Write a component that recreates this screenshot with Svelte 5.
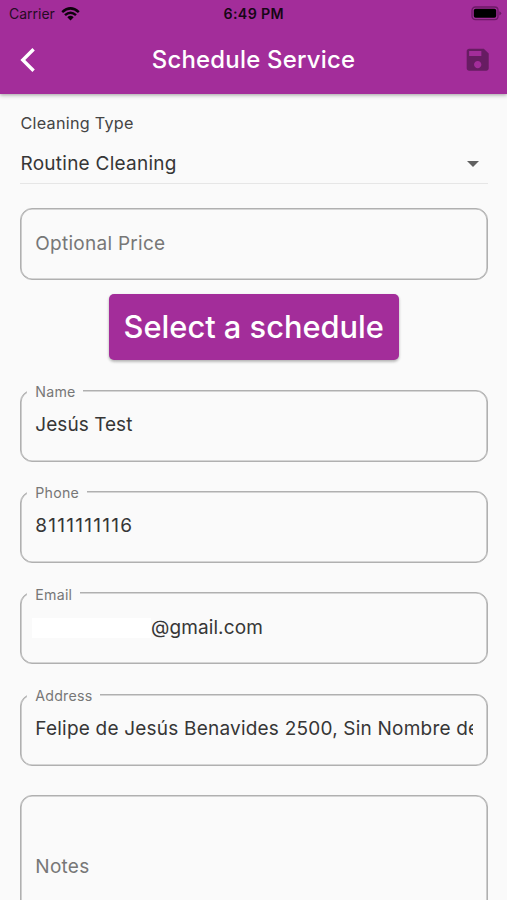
<script lang="ts">
  type Field = { id: string; label: string; value: string; spacing: number };

  let cleaningType = $state("Routine Cleaning");

  const fields: Field[] = [
    { id: "name", label: "Name", value: "Jesús Test", spacing: 0.05 },
    { id: "phone", label: "Phone", value: "8111111116", spacing: 1.25 },
    { id: "email", label: "Email", value: "@gmail.com", spacing: 0.1 },
    { id: "address", label: "Address", value: "Felipe de Jesús Benavides 2500, Sin Nombre de Colonia", spacing: 0.21 },
  ];
</script>

<div class="screen">
  <header>
    <div class="status">
      <div class="carrier">
        <span>Carrier</span>
        <svg width="19" height="14" viewBox="0 0 19 14">
          <path d="M1.2 5.2 Q9.5 -2.4 17.8 5.2" />
          <path d="M4 8.2 Q9.5 3.2 15 8.2" />
          <path class="dot" d="M6.3 10.2 Q9.5 7.4 12.7 10.2 L9.5 13.6 Z" />
        </svg>
      </div>
      <span class="time">6:49 PM</span>
      <svg class="battery" width="31" height="15" viewBox="0 0 31 15">
        <rect x="1" y="1" width="26" height="12.6" rx="3.4" class="case" />
        <rect x="2.8" y="2.8" width="22.4" height="9" rx="1.8" />
        <path d="M28.3 5.2 Q30.2 6 30.2 7.3 Q30.2 8.6 28.3 9.4 Z" class="cap" />
      </svg>
    </div>
    <div class="bar">
      <button class="icon" aria-label="Back">
        <svg width="20" height="28" viewBox="0 0 20 28">
          <path class="chevron" d="M16.6 3.2 L5.8 14 L16.6 24.8" />
        </svg>
      </button>
      <h1>Schedule Service</h1>
      <button class="icon" aria-label="Save">
        <svg width="29.4" height="29.4" viewBox="0 0 24 24">
          <path class="save" d="M17 3H5c-1.11 0-2 .9-2 2v14c0 1.1.89 2 2 2h14c1.1 0 2-.9 2-2V7l-4-4zm-5 16c-1.66 0-3-1.34-3-3s1.34-3 3-3 3 1.34 3 3-1.34 3-3 3zm3-10H5V5h10v4z" />
        </svg>
      </button>
    </div>
  </header>

  <main>
    <div class="caption">Cleaning Type</div>
    <div class="select">
      <span>{cleaningType}</span>
      <svg width="12" height="6" viewBox="0 0 12 6"><path d="M0 0h12L6 6z" /></svg>
    </div>

    <div class="field price"><span class="placeholder">Optional Price</span></div>

    <button class="schedule">Select a schedule</button>

    {#each fields as f (f.id)}
      <div class="field">
        <span class="label">{f.label}</span>
        {#if f.id === "email"}<span class="mask"></span>{/if}
        <span class="value" style="letter-spacing: {f.spacing}px">{f.value}</span>
      </div>
    {/each}

    <div class="field notes"><span class="placeholder">Notes</span></div>
  </main>
</div>

<style>
  :global(body) { background: #fafafa; overflow: hidden; }
  .screen {
    width: 507px; height: 900px; overflow: hidden;
    display: flex; flex-direction: column;
    background: #fafafa; color: #363636;
    font-family: Inter, Roboto, "Liberation Sans", sans-serif;
  }
  button { border: none; padding: 0; background: none; font: inherit; }

  header {
    height: 93.5px; flex: none; background: #a32d9a; z-index: 1;
    box-shadow: 0 2px 4px rgba(0, 0, 0, 0.2), 0 1px 2px rgba(0, 0, 0, 0.12);
  }
  .status {
    height: 27px; padding: 0 5px 0 9px; color: #260b24;
    display: grid; grid-template-columns: 1fr auto 1fr; align-items: center;
    font-size: 14px;
  }
  .carrier { display: flex; align-items: center; gap: 6px; }
  .carrier path { fill: none; stroke: #0d020c; stroke-width: 2.5; }
  .carrier .dot { fill: #0d020c; stroke: none; }
  .time { font-weight: 600; font-size: 14.2px; letter-spacing: 0.35px; margin-right: 3.5px; color: #160615; }
  .battery { justify-self: end; }
  .case { fill: none; stroke: #6c1a66; stroke-width: 1.3; }
  .cap { fill: #6c1a66; }
  .bar {
    height: 65px; padding: 0 15px 0 17px;
    display: flex; align-items: center; justify-content: space-between;
  }
  .icon { display: flex; width: 29.4px; }
  .chevron { fill: none; stroke: #fff; stroke-width: 3.4; }
  .save { fill: #671c62; }
  h1 { margin: 0 2px 0 0; color: #fff; font-size: 23.9px; font-weight: 500; letter-spacing: 0.22px; }

  main { padding: 19px 19.5px 0 20px; display: flex; flex-direction: column; }
  .caption { height: 24px; line-height: 21px; font-size: 16.2px; letter-spacing: 0.26px; padding-left: 0.5px; color: #444; }
  .select {
    height: 46px; padding: 0 8.5px 0 0.5px;
    display: flex; align-items: center; justify-content: space-between;
    border-bottom: 1px solid #e6e6e6; font-size: 19px; letter-spacing: 0.25px;
  }
  .select span { padding-top: 8px; }
  .select svg { margin-top: 8px; fill: #606060; }

  .field {
    position: relative; box-sizing: border-box; flex: none;
    height: 72px; margin-bottom: 29.4px; padding: 0 13.5px 0 14.3px;
    border: 1px solid #b0b0b0; border-radius: 12px;
    box-shadow: inset 0 0 0 0.6px #b0b0b0;
    display: flex; align-items: center;
    font-size: 19px;
  }
  .price { margin: 24px 0 14.5px; }
  .label {
    position: absolute; top: -7.5px; left: 6px; padding: 0 7.5px 0 8.3px;
    background: #fafafa; color: #777; font-size: 14.2px; line-height: 17px; letter-spacing: 0.22px;
  }
  .value { flex: 1; overflow: hidden; white-space: nowrap; line-height: 28px; padding-bottom: 1.5px; }
  .mask { width: 119px; height: 20px; margin-left: -3.3px; background: #fff; }
  .placeholder { color: #777; letter-spacing: 0.27px; }
  .notes { height: 142px; margin-bottom: 0; }

  .schedule {
    align-self: center; width: 290px; height: 66px; flex: none; margin-bottom: 29.5px;
    border-radius: 5px; background: #a32d9a; color: #fff;
    font-size: 30.8px; font-weight: 500; line-height: 38px; letter-spacing: 0; white-space: nowrap;
    box-shadow: 0 2px 3px rgba(0, 0, 0, 0.2), 0 1px 3px rgba(0, 0, 0, 0.12);
  }
</style>
